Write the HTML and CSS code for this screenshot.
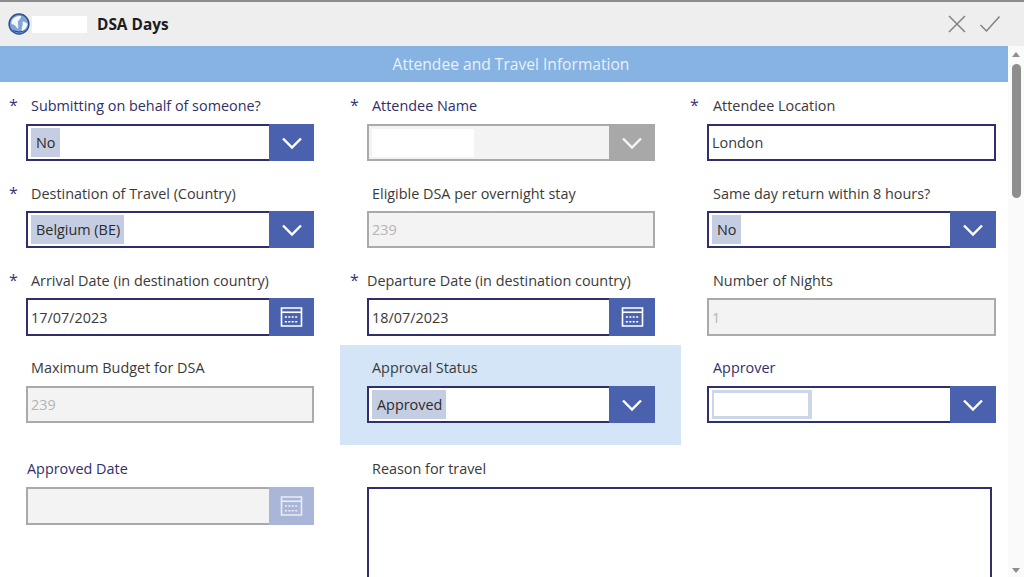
FILE: index.html
```html
<!DOCTYPE html>
<html lang="en">
<head>
<meta charset="utf-8">
<title>DSA Days</title>
<link rel="stylesheet" href="styles.css">
</head>
<body>
<svg class="sprite" width="0" height="0" aria-hidden="true">
  <defs>
    <symbol id="chev" viewBox="0 0 22 14"><path d="M2 2.5 11 11.5 20 2.5" fill="none" stroke="currentColor" stroke-width="2.4"/></symbol>
    <symbol id="cal" viewBox="0 0 24 21">
      <path d="M1.5 1H22.5V20H1.5Z" fill="none" stroke="currentColor" stroke-width="1.7"/>
      <path d="M1.5 5.5H22.5" stroke="currentColor" stroke-width="1.7"/>
      <path d="M5 10.5H19M5 15.5H19" stroke="currentColor" stroke-width="1.6" stroke-dasharray="2.2 1.4"/>
    </symbol>
  </defs>
</svg>
<div class="app">
  <header class="titlebar">
    <svg class="globe" viewBox="0 0 22 22" width="22" height="22" aria-hidden="true">
      <circle cx="11" cy="11" r="9.9" fill="#7fa6d6" stroke="#2f4f93" stroke-width="1.5"/>
      <path d="M3.5 8C5.5 4 9.5 2.5 13 3 13.5 5.5 10.5 6.5 10 9 9.5 11.5 11 12.5 10 16 8 14 7.5 11.5 3.5 11Z" fill="#f4f7fb"/>
      <path d="M14.5 8.5C16.5 8.5 18.5 9.5 19.5 11 19 14 17 17 14 18.5 13 15 15.5 12.5 14.5 8.5Z" fill="#f4f7fb"/>
      <path d="M4.5 16.5C7 20.5 15 20.5 17.5 16.5 14 19 9 19 4.5 16.5Z" fill="#1f3c7d"/>
    </svg>
    <span class="logo-mask"></span>
    <h1 class="app-title">DSA Days</h1>
    <svg class="action" viewBox="0 0 20 20" width="20" height="20" aria-hidden="true"><path d="M2 2 18 18M18 2 2 18" fill="none" stroke="#808080" stroke-width="1.5"/></svg>
    <svg class="action action-check" viewBox="0 0 22 18" width="22" height="18" aria-hidden="true"><path d="M1.5 10 7.5 16 20.5 1.5" fill="none" stroke="#808080" stroke-width="1.5"/></svg>
  </header>
  <div class="main">
    <div class="content">
      <div class="band">Attendee and Travel Information</div>
      <form class="form">
        <div class="cell">
          <div class="label"><span class="star">*</span><span class="navy">Submitting on behalf of someone?</span></div>
          <div class="control"><div class="value"><span class="chip">No</span></div><span class="btn"><svg class="chev"><use href="#chev"/></svg></span></div>
        </div>
        <div class="cell mid">
          <div class="label"><span class="star">*</span><span class="navy">Attendee Name</span></div>
          <div class="control disabled"><div class="value"><span class="mask"></span></div><span class="btn"><svg class="chev"><use href="#chev"/></svg></span></div>
        </div>
        <div class="cell">
          <div class="label"><span class="star">*</span><span>Attendee Location</span></div>
          <div class="control wide"><div class="value">London</div></div>
        </div>

        <div class="cell low">
          <div class="label"><span class="star">*</span><span>Destination of Travel (Country)</span></div>
          <div class="control"><div class="value"><span class="chip">Belgium (BE)</span></div><span class="btn"><svg class="chev"><use href="#chev"/></svg></span></div>
        </div>
        <div class="cell low mid">
          <div class="label"><span class="star blank"></span><span>Eligible DSA per overnight stay</span></div>
          <div class="control disabled"><div class="value">239</div></div>
        </div>
        <div class="cell low">
          <div class="label"><span class="star blank"></span><span>Same day return within 8 hours?</span></div>
          <div class="control wide"><div class="value"><span class="chip">No</span></div><span class="btn"><svg class="chev"><use href="#chev"/></svg></span></div>
        </div>

        <div class="cell low">
          <div class="label"><span class="star">*</span><span>Arrival Date (in destination country)</span></div>
          <div class="control tall"><div class="value">17/07/2023</div><span class="btn"><svg class="cal"><use href="#cal"/></svg></span></div>
        </div>
        <div class="cell low mid">
          <div class="label"><span class="star tight">*</span><span>Departure Date (in destination country)</span></div>
          <div class="control tall"><div class="value">18/07/2023</div><span class="btn"><svg class="cal"><use href="#cal"/></svg></span></div>
        </div>
        <div class="cell low">
          <div class="label"><span class="star blank"></span><span>Number of Nights</span></div>
          <div class="control disabled wide tall"><div class="value">1</div></div>
        </div>

        <div class="cell">
          <div class="label"><span class="star blank"></span><span>Maximum Budget for DSA</span></div>
          <div class="control disabled"><div class="value">239</div></div>
        </div>
        <div class="cell mid highlight">
          <div class="label"><span class="star blank"></span><span>Approval Status</span></div>
          <div class="control"><div class="value"><span class="chip">Approved</span></div><span class="btn"><svg class="chev"><use href="#chev"/></svg></span></div>
        </div>
        <div class="cell">
          <div class="label"><span class="star blank"></span><span class="navy">Approver</span></div>
          <div class="control wide"><div class="value"><span class="chip chip-masked"><span class="chip-inner"></span></span></div><span class="btn"><svg class="chev"><use href="#chev"/></svg></span></div>
        </div>

        <div class="cell last">
          <div class="label"><span class="star tight blank"></span><span class="navy">Approved Date</span></div>
          <div class="control disabled tall"><div class="value"></div><span class="btn soft"><svg class="cal"><use href="#cal"/></svg></span></div>
        </div>
        <div class="cell last mid span2">
          <div class="label"><span class="star blank"></span><span>Reason for travel</span></div>
          <div class="control area"></div>
        </div>
      </form>
    </div>
    <aside class="scrollbar">
      <span class="arrow up"></span>
      <span class="thumb"></span>
      <span class="spacer"></span>
      <span class="arrow down"></span>
    </aside>
  </div>
</div>
</body>
</html>
```

FILE: styles.css
```css
* { box-sizing: border-box; }
html, body { margin: 0; padding: 0; }
body {
  width: 1024px;
  height: 577px;
  overflow: hidden;
  background: #fff;
  font-family: "Open Sans", "Liberation Sans", sans-serif;
  font-size: 14.4px;
  color: #3a3a3a;
}
.sprite { display: block; width: 0; height: 0; }
.app { display: flex; flex-direction: column; height: 577px; }

.titlebar {
  flex: none;
  height: 46px;
  display: flex;
  align-items: center;
  padding: 0 23px 0 8px;
  background: #eeeeee;
  border-top: 2px solid #8c8c8c;
}
.globe { flex: none; margin-right: 2px; }
.logo-mask { flex: none; width: 55px; height: 17px; background: #fff; margin-right: 10px; }
.app-title { margin: 0; flex: 1; font-size: 15.4px; font-weight: 700; color: #1c1c1c; }
.action { flex: none; }
.action-check { margin-left: 12px; }

.main { flex: 1; min-height: 0; display: flex; overflow: hidden; }
.content { flex: none; width: 1008px; }
.band {
  height: 36px;
  display: flex;
  align-items: center;
  justify-content: center;
  padding: 0 0 1px 14px;
  background: #86b3e1;
  color: #e9f1fa;
  font-size: 15.6px;
}

.form {
  display: grid;
  grid-template-columns: 340px 341px 327px;
  grid-template-rows: 87px 87px 88px 100px 140px;
  padding-top: 1px;
}
.cell { padding: 13px 0 0 9px; }
.cell.mid { padding-left: 10px; }
.cell.last { padding-top: 14px; }
.span2 { grid-column: span 2; }
.highlight { background: #d4e5f7; }

.label { display: flex; height: 20px; margin-bottom: 8px; line-height: 20px; white-space: nowrap; }
.low .label { margin-top: 1px; margin-bottom: 7px; }
.star { flex: none; width: 22px; color: #34347a; font-size: 16px; line-height: 18px; }
.cell:nth-child(3n) .star { width: 23px; }
.star.tight { width: 17px; }
.star.tight.blank { width: 18px; }
.navy { color: #2f2f6b; }

.control {
  display: flex;
  width: 288px;
  height: 37px;
  margin-left: 17px;
  border: 2px solid #2f2f6e;
  background: #fff;
}
.control.wide { width: 289px; }
.control.tall { height: 38px; }
.control.area { width: 625px; height: 130px; }
.control.disabled { border-color: #aaaaaa; background: #f3f3f3; color: #b5b5b5; }
.value { flex: 1; display: flex; align-items: center; padding: 0 3px; color: inherit; min-width: 0; }
.tall .value { padding-top: 1px; }
.chip {
  display: flex;
  align-items: center;
  height: 29px;
  padding: 0 4px 0 5px;
  background: #c5cde3;
  color: #2b2b2b;
}
.chip-masked { width: 100px; padding: 0 4px 0 2px; background: #cdd6e8; }
.chip-inner { display: block; width: 94px; height: 23px; background: #fff; }
.mask { display: block; width: 102px; height: 28px; background: #fff; }

.btn {
  flex: none;
  width: 45px;
  margin: -2px -2px -2px 0;
  display: flex;
  align-items: center;
  justify-content: center;
  background: #4a62ad;
  color: #fff;
}
.mid .btn, .wide .btn { width: 46px; }
.disabled .btn { background: #a8a8a8; color: #f5f5f5; }
.disabled .btn.soft { background: #a9b6d8; color: #e9edf6; }
.chev { width: 22px; height: 14px; }
.cal { width: 23px; height: 20px; }

.scrollbar {
  flex: none;
  width: 16px;
  display: flex;
  flex-direction: column;
  align-items: center;
  padding: 6px 0 4px;
  background: #fafafa;
}
.arrow { flex: none; width: 0; height: 0; border-left: 4px solid transparent; border-right: 4px solid transparent; }
.arrow.up { border-bottom: 5px solid #8e8e8e; }
.arrow.down { border-top: 5px solid #8e8e8e; }
.thumb { flex: none; width: 9px; height: 134px; margin-top: 7px; border-radius: 5px; background: #8e8e8e; }
.spacer { flex: 1; }
```
